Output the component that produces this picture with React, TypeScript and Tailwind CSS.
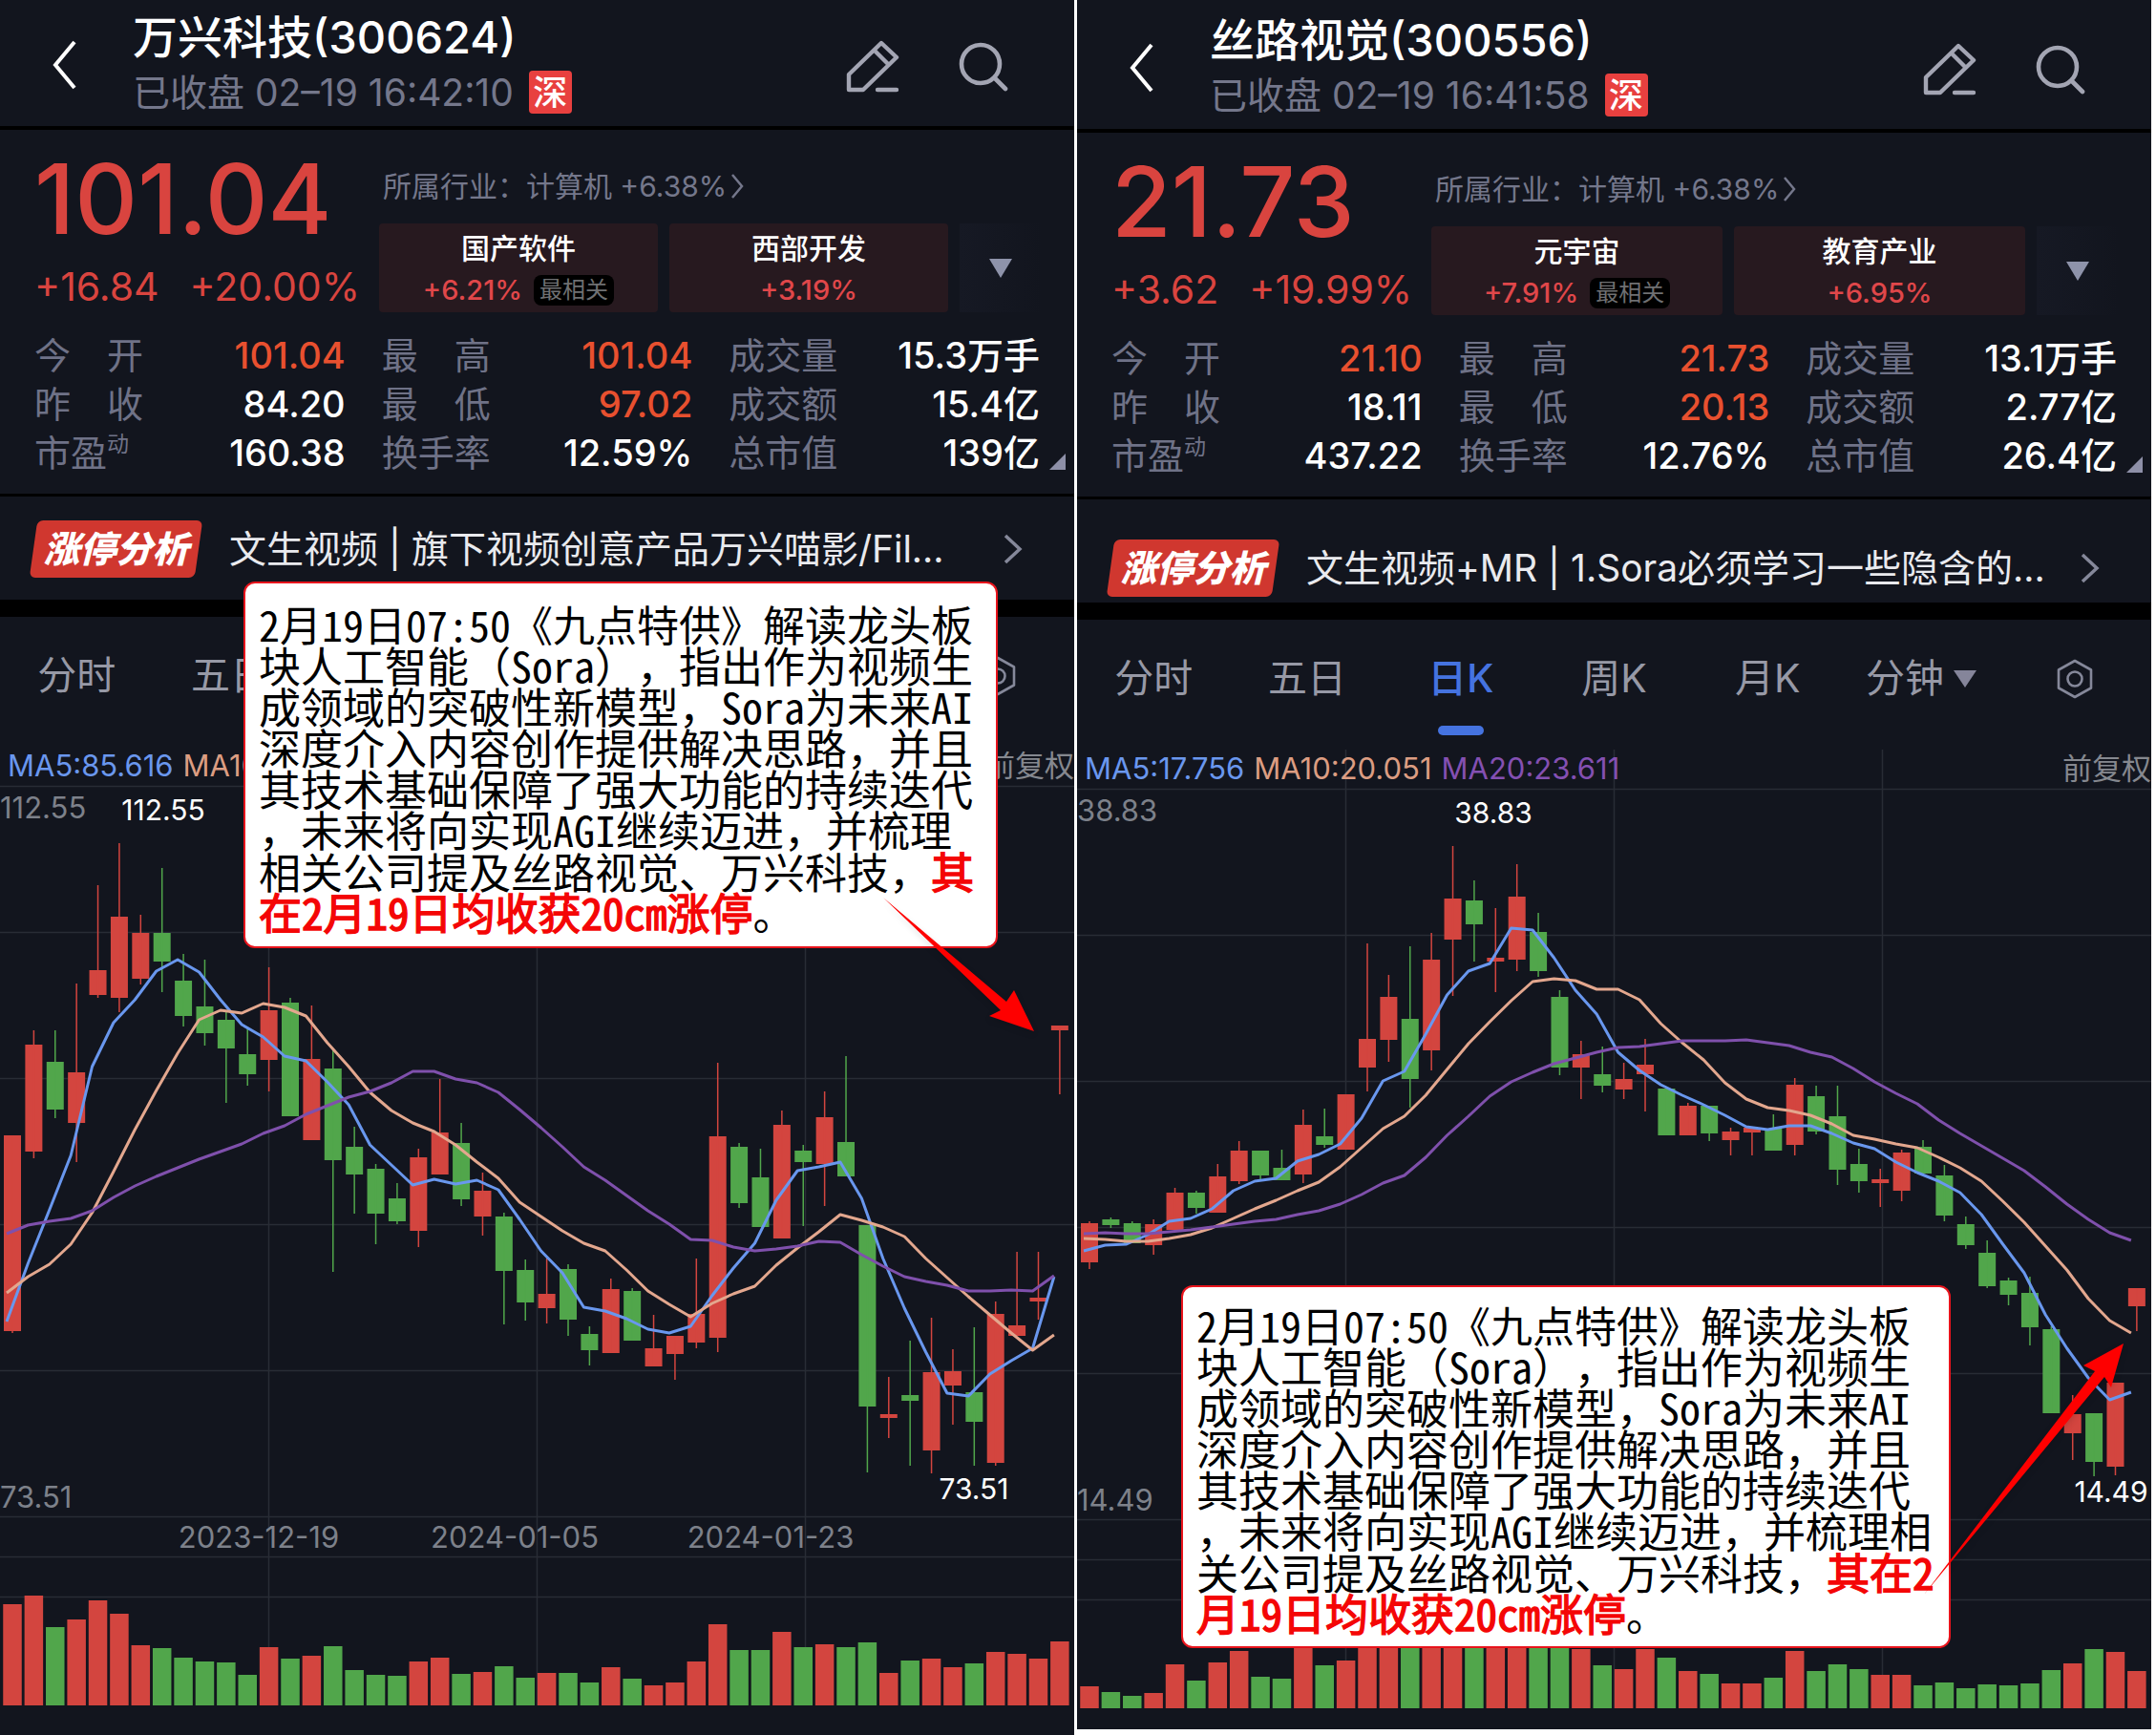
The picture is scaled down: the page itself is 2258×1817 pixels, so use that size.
import React from "react";

type Candle = [number, number, number, number, number];

interface Stat {
  label: React.ReactNode;
  value: string;
  up?: boolean;
}

interface Stock {
  name: string;
  time: string;
  price: string;
  change: string;
  percent: string;
  chips: { name: string; percent: string; best?: boolean }[];
  stats: Stat[];
  analysis: string;
  ma: string[];
  high: string;
  low: string;
}

const UP = "#d3453f";
const DOWN = "#51a64b";
const STEP = 22.385;

/* [colour: 1 up / 0 down, body top, body bottom, wick top, wick bottom] */
const candlesA: Candle[] = [
  [1, 1189, 1394, 1189, 1396], [1, 1094, 1206, 1079, 1213], [0, 1112, 1162, 1079, 1171], [1, 1123, 1176, 1030, 1217],
  [1, 1016, 1042, 927, 1045], [1, 960, 1045, 883, 1060], [1, 977, 1025, 958, 1031], [0, 977, 1007, 909, 1039],
  [0, 1027, 1064, 999, 1075], [0, 1054, 1082, 1005, 1095], [0, 1068, 1098, 1060, 1155], [0, 1104, 1125, 1077, 1137],
  [1, 1058, 1110, 1013, 1143], [0, 1050, 1169, 1045, 1169], [1, 1109, 1194, 1053, 1194], [0, 1119, 1215, 1098, 1332],
  [0, 1201, 1230, 1180, 1271], [0, 1224, 1271, 1219, 1303], [0, 1255, 1279, 1239, 1282], [1, 1212, 1289, 1203, 1306],
  [1, 1186, 1230, 1130, 1230], [0, 1197, 1256, 1176, 1263], [1, 1247, 1274, 1228, 1294], [0, 1274, 1331, 1270, 1387],
  [0, 1330, 1364, 1319, 1383], [1, 1355, 1370, 1318, 1386], [0, 1329, 1382, 1324, 1399], [0, 1397, 1414, 1389, 1430],
  [1, 1350, 1417, 1339, 1417], [0, 1352, 1404, 1349, 1404], [1, 1412, 1431, 1377, 1431], [1, 1399, 1418, 1399, 1445],
  [1, 1376, 1406, 1318, 1412], [1, 1190, 1401, 1113, 1416], [0, 1201, 1260, 1197, 1265], [0, 1233, 1285, 1203, 1285],
  [1, 1178, 1297, 1163, 1297], [0, 1205, 1217, 1199, 1284], [1, 1170, 1219, 1143, 1263], [0, 1196, 1232, 1106, 1232],
  [0, 1283, 1473, 1283, 1542], [1, 1481, 1485, 1442, 1506], [0, 1461, 1467, 1404, 1535], [1, 1437, 1519, 1380, 1543],
  [1, 1436, 1451, 1413, 1492], [0, 1458, 1489, 1390, 1535], [1, 1376, 1532, 1363, 1535], [1, 1388, 1399, 1311, 1399],
  [1, 1359, 1363, 1311, 1382], [1, 1074, 1079, 1074, 1146],
];
const volumeA = [
  106, 115, 82, 90, 110, 96, 63, 60, 50, 46, 45, 32, 61, 49, 52, 62, 37, 32, 31, 46, 50, 33, 35, 41, 29, 34, 34, 24, 40,
  28, 21, 24, 46, 85, 58, 58, 77, 61, 64, 61, 66, 34, 47, 49, 40, 44, 56, 54, 49, 67,
];
const ma5A = [
  1384, 1323, 1267, 1210, 1117, 1071, 1047, 1017, 1005, 1018, 1047, 1073, 1086, 1106, 1111, 1133, 1157, 1199, 1220, 1241,
  1235, 1240, 1236, 1246, 1277, 1310, 1333, 1369, 1373, 1381, 1392, 1396, 1389, 1357, 1328, 1302, 1257, 1226, 1222, 1217,
  1255, 1318, 1370, 1416, 1459, 1462, 1439, 1425, 1412, 1337,
];
const ma10A = [
  1354, 1337, 1324, 1303, 1270, 1227, 1183, 1142, 1103, 1068, 1058, 1061, 1051, 1055, 1064, 1092, 1117, 1144, 1163, 1176,
  1185, 1199, 1217, 1234, 1259, 1274, 1289, 1302, 1310, 1330, 1352, 1366, 1379, 1365, 1355, 1347, 1325, 1307, 1290, 1272,
  1278, 1285, 1295, 1318, 1338, 1358, 1377, 1396, 1414, 1398,
];
const ma20A = [
  1292, 1283, 1279, 1276, 1268, 1254, 1242, 1232, 1223, 1214, 1206, 1198, 1187, 1179, 1167, 1158, 1149, 1143, 1134, 1122,
  1122, 1130, 1134, 1144, 1162, 1181, 1201, 1222, 1236, 1252, 1268, 1282, 1298, 1299, 1306, 1310, 1308, 1305, 1300, 1301,
  1314, 1326, 1337, 1342, 1346, 1352, 1352, 1351, 1352, 1336,
];

const candlesB: Candle[] = [
  [1, 1281, 1322, 1279, 1329], [0, 1277, 1283, 1275, 1286], [0, 1281, 1302, 1279, 1302], [1, 1282, 1304, 1277, 1314],
  [1, 1249, 1288, 1244, 1288], [0, 1249, 1265, 1247, 1271], [1, 1232, 1270, 1219, 1270], [1, 1205, 1237, 1195, 1240],
  [0, 1205, 1231, 1205, 1235], [0, 1223, 1236, 1204, 1236], [1, 1178, 1230, 1162, 1239], [0, 1190, 1199, 1161, 1202],
  [1, 1146, 1204, 1146, 1204], [1, 1088, 1118, 988, 1143], [1, 1044, 1089, 1021, 1112], [0, 1067, 1130, 991, 1160],
  [1, 1005, 1100, 977, 1121], [1, 941, 984, 886, 1043], [0, 943, 968, 922, 1007], [1, 1003, 1007, 951, 1039],
  [1, 939, 1005, 905, 1017], [0, 976, 1017, 956, 1023], [0, 1044, 1118, 1037, 1126], [1, 1104, 1118, 1090, 1151],
  [0, 1125, 1137, 1096, 1144], [1, 1130, 1141, 1113, 1151], [1, 1115, 1125, 1088, 1164], [0, 1140, 1189, 1140, 1189],
  [1, 1158, 1189, 1155, 1189], [0, 1158, 1187, 1158, 1195], [1, 1185, 1194, 1181, 1210], [1, 1181, 1186, 1181, 1210],
  [0, 1182, 1205, 1167, 1205], [1, 1136, 1199, 1129, 1210], [0, 1148, 1185, 1137, 1188], [0, 1169, 1225, 1137, 1241],
  [0, 1219, 1237, 1203, 1249], [1, 1235, 1239, 1224, 1264], [1, 1207, 1247, 1204, 1258], [0, 1201, 1229, 1194, 1229],
  [0, 1231, 1273, 1220, 1279], [0, 1282, 1304, 1274, 1308], [0, 1312, 1347, 1299, 1349], [0, 1341, 1356, 1338, 1367],
  [0, 1354, 1390, 1337, 1409], [0, 1392, 1480, 1389, 1480], [1, 1481, 1501, 1461, 1529], [0, 1480, 1531, 1480, 1546],
  [1, 1448, 1536, 1448, 1545], [1, 1349, 1368, 1349, 1394],
];
const volumeB = [
  23, 17, 13, 16, 46, 29, 48, 60, 33, 31, 70, 45, 50, 80, 80, 80, 80, 80, 80, 80, 80, 80, 80, 62, 45, 41, 62, 53, 39, 36,
  26, 26, 32, 60, 39, 46, 41, 35, 35, 24, 27, 21, 25, 24, 26, 40, 47, 62, 59, 39,
];
const ma5B = [
  1310, 1304, 1303, 1293, 1279, 1276, 1266, 1247, 1237, 1234, 1216, 1209, 1198, 1171, 1132, 1122, 1083, 1042, 1017, 1009,
  972, 974, 1003, 1037, 1062, 1102, 1121, 1136, 1147, 1157, 1168, 1180, 1183, 1179, 1179, 1187, 1197, 1203, 1217, 1228,
  1237, 1249, 1272, 1303, 1333, 1377, 1412, 1443, 1466, 1458,
];
const ma10B = [
  1297, 1298, 1300, 1300, 1297, 1293, 1286, 1276, 1266, 1257, 1247, 1238, 1222, 1202, 1182, 1169, 1147, 1120, 1093, 1070,
  1048, 1028, 1025, 1027, 1036, 1036, 1047, 1072, 1092, 1110, 1134, 1151, 1160, 1163, 1168, 1177, 1189, 1193, 1198, 1202,
  1212, 1223, 1237, 1258, 1280, 1305, 1330, 1360, 1383, 1396,
];
const ma20B = [
  1292, 1291, 1292, 1292, 1290, 1288, 1285, 1282, 1279, 1277, 1272, 1268, 1261, 1251, 1239, 1231, 1212, 1189, 1169, 1148,
  1133, 1123, 1114, 1108, 1102, 1097, 1096, 1093, 1090, 1090, 1090, 1089, 1092, 1095, 1102, 1107, 1119, 1133, 1145, 1156,
  1173, 1187, 1200, 1213, 1226, 1243, 1261, 1277, 1291, 1299,
];

const stockA: Stock = {
  name: "万兴科技(300624)",
  time: "已收盘 02–19 16:42:10",
  price: "101.04",
  change: "+16.84",
  percent: "+20.00%",
  chips: [
    { name: "国产软件", percent: "+6.21%", best: true },
    { name: "西部开发", percent: "+3.19%" },
  ],
  stats: [
    { label: "今　开", value: "101.04", up: true },
    { label: "最　高", value: "101.04", up: true },
    { label: "成交量", value: "15.3万手" },
    { label: "昨　收", value: "84.20" },
    { label: "最　低", value: "97.02", up: true },
    { label: "成交额", value: "15.4亿" },
    { label: <Pe />, value: "160.38" },
    { label: "换手率", value: "12.59%" },
    { label: "总市值", value: "139亿" },
  ],
  analysis: "文生视频 | 旗下视频创意产品万兴喵影/Fil...",
  ma: ["MA5:85.616", "MA10"],
  high: "112.55",
  low: "73.51",
};

const stockB: Stock = {
  name: "丝路视觉(300556)",
  time: "已收盘 02–19 16:41:58",
  price: "21.73",
  change: "+3.62",
  percent: "+19.99%",
  chips: [
    { name: "元宇宙", percent: "+7.91%", best: true },
    { name: "教育产业", percent: "+6.95%" },
  ],
  stats: [
    { label: "今　开", value: "21.10", up: true },
    { label: "最　高", value: "21.73", up: true },
    { label: "成交量", value: "13.1万手" },
    { label: "昨　收", value: "18.11" },
    { label: "最　低", value: "20.13", up: true },
    { label: "成交额", value: "2.77亿" },
    { label: <Pe />, value: "437.22" },
    { label: "换手率", value: "12.76%" },
    { label: "总市值", value: "26.4亿" },
  ],
  analysis: "文生视频+MR | 1.Sora必须学习一些隐含的...",
  ma: ["MA5:17.756", "MA10:20.051", "MA20:23.611"],
  high: "38.83",
  low: "14.49",
};

function Pe() {
  return (
    <span className="flex items-start">
      市盈<span className="text-[23px] leading-8">动</span>
    </span>
  );
}

function Header({ stock, className }: { stock: Stock; className: string }) {
  return (
    <header className={`flex items-center border-b-4 border-black pb-[13px] pl-[54px] pr-[69px] ${className}`}>
      <button type="button" aria-label="返回" className="mt-1">
        <svg width="28" height="52" viewBox="0 0 28 52" fill="none" stroke="#fff" strokeWidth="4">
          <path d="M24 2 4 26l20 24" />
        </svg>
      </button>
      <div className="ml-[57px] flex flex-1 flex-col gap-1.5 whitespace-nowrap">
        <h1 className="text-[47px] font-medium leading-[54px] text-white">{stock.name}</h1>
        <p className="flex items-center gap-4 pt-0.5 text-[39px] leading-[45px] text-[#74778b]">
          {stock.time}
          <span className="flex h-[45px] w-[45px] items-center justify-center rounded-sm bg-[#e8403f] text-4xl font-medium text-white">
            深
          </span>
        </p>
      </div>
      <div className="mt-2 flex items-center gap-[62px] text-[#a3a5b3]">
        <button type="button" aria-label="编辑">
          <svg width="57" height="57" viewBox="0 0 57 57" fill="none" stroke="currentColor" strokeWidth="4.4" strokeLinecap="round" strokeLinejoin="round">
            <path d="M38 4 54 19 19 53H4V37ZM31 12 45 26M34 53H54" />
          </svg>
        </button>
        <button type="button" aria-label="搜索">
          <svg width="52" height="52" viewBox="0 0 52 52" fill="none" stroke="currentColor" strokeWidth="4.6" strokeLinecap="round">
            <circle cx="23" cy="23" r="20" />
            <path d="m38 38 11 11" />
          </svg>
        </button>
      </div>
    </header>
  );
}

function Quote({ stock }: { stock: Stock }) {
  return (
    <section className="border-b-[3px] border-black pb-[17px]">
      <div className="flex gap-5 pl-9 pr-[34px] pt-9">
        <div className="whitespace-nowrap text-[#d9443f]">
          <p className="text-[102px] font-medium leading-[72px]">{stock.price}</p>
          <p className="mt-9 flex gap-8 text-[41px] leading-10">
            <span>{stock.change}</span>
            <span>{stock.percent}</span>
          </p>
        </div>
        <div className="min-w-0 flex-1">
          <a href="#industry" className="flex items-center gap-1 whitespace-nowrap pl-1 text-[30px] leading-[46px] text-[#74778b]">
            <span>所属行业：计算机 +6.38%</span>
            <svg width="14" height="28" viewBox="0 0 14 28" fill="none" stroke="currentColor" strokeWidth="2.5">
              <path d="m2 2 10 12L2 26" />
            </svg>
          </a>
          <div className="mt-4 flex gap-3">
            {stock.chips.map((chip) => (
              <button
                type="button"
                key={chip.name}
                className="flex h-[93px] flex-1 flex-col items-center justify-center gap-1.5 whitespace-nowrap rounded-sm bg-[#27191f] font-medium"
              >
                <span className="text-[30px] leading-10 text-white">{chip.name}</span>
                <span className="flex items-center gap-3 text-[29px] leading-9 text-[#e0474a]">
                  {chip.percent}
                  {chip.best && (
                    <span className="rounded-lg bg-black px-1.5 text-2xl font-normal leading-8 text-[#6f7072]">最相关</span>
                  )}
                </span>
              </button>
            ))}
            <button type="button" aria-label="更多板块" className="flex w-[86px] items-center justify-center bg-linear-to-r from-[#161924] to-[#12151e]">
              <svg width="24" height="20" viewBox="0 0 24 20" fill="#8e93aa">
                <path d="M0 0h24L12 20Z" />
              </svg>
            </button>
          </div>
        </div>
      </div>
      <div className="relative">
        <dl className="mt-5 grid grid-cols-3 gap-x-[38px] px-9">
          {stock.stats.map((s, i) => (
            <div key={i} className="flex justify-between whitespace-nowrap text-[38px] leading-[51px]">
              <dt className="text-[#6f7287]">{s.label}</dt>
              <dd className={s.up ? "font-medium text-[#e8502f]" : "font-medium text-white"}>{s.value}</dd>
            </div>
          ))}
        </dl>
        <svg className="absolute bottom-2 right-[9px]" width="17" height="17" viewBox="0 0 17 17" fill="#8e90a8">
          <path d="M17 0v17H0Z" />
        </svg>
      </div>
    </section>
  );
}

function Analysis({ text, className }: { text: string; className: string }) {
  return (
    <a href="#analysis" className={`flex items-center border-b-black pl-[31px] pr-[54px] ${className}`}>
      <span className="relative flex h-[60px] w-[181px] items-center justify-center">
        <span className="absolute inset-x-1 inset-y-0 -skew-x-[8deg] rounded-md bg-[#d0372f]" />
        <span className="relative whitespace-nowrap text-[38px] font-black italic text-white">涨停分析</span>
      </span>
      <span className="ml-[28px] flex-1 whitespace-nowrap text-[39px] leading-[60px] text-[#e9eaee]">{text}</span>
      <svg width="20" height="32" viewBox="0 0 20 32" fill="none" stroke="#85889a" strokeWidth="3.5">
        <path d="m2 2 15 14L2 30" />
      </svg>
    </a>
  );
}

function Tabs({ covered = false }: { covered?: boolean }) {
  const tab = "flex h-[54px] items-center justify-center whitespace-nowrap";
  return (
    <nav className="grid h-[136px] grid-cols-7 items-start pt-[35px] text-[41px] text-[#9799a6]">
      <button type="button" className={tab}>分时</button>
      <button type="button" className={tab}>五日</button>
      {covered ? (
        <span className="col-span-4" />
      ) : (
        <>
          <button type="button" className="flex flex-col items-center text-[#4573e0]">
            <span className="flex h-[54px] items-center font-medium">日K</span>
            <span className="mt-[22px] h-2.5 w-12 rounded-full bg-[#4573e0]" />
          </button>
          <button type="button" className={tab}>周K</button>
          <button type="button" className={tab}>月K</button>
          <button type="button" aria-haspopup="menu" className="flex h-[54px] items-center justify-center gap-2.5 whitespace-nowrap">
            分钟
            <svg width="24" height="18" viewBox="0 0 24 18" fill="#85859a">
              <path d="M0 0h24L12 18Z" />
            </svg>
          </button>
        </>
      )}
      <button type="button" aria-label="图表设置" className={tab}>
        <svg width="38" height="42" viewBox="0 0 38 42" fill="none" stroke="#85889a" strokeWidth="2.6" strokeLinejoin="round">
          <path d="m19 2 17 9.500v19L19 40 2 30.500v-19Z" />
          <circle cx="19" cy="21" r="7.500" />
        </svg>
      </button>
    </nav>
  );
}

function line(values: number[]) {
  return values.map((y, i) => `${(7 + i * STEP).toFixed(1)},${y}`).join(" ");
}

interface ChartProps {
  stock: Stock;
  top: number;
  height: number;
  candles: Candle[];
  volume: number[];
  mas: [number[], number[], number[]];
  highX: number;
  lowX: number;
  dates: [string, number][];
}

function Chart({ stock, top, height, candles, volume, mas, highX, lowX, dates }: ChartProps) {
  const base = top + 963;
  return (
    <section className="flex flex-col">
      <div className="relative z-10 flex h-[41px] items-center gap-2.5 whitespace-nowrap pl-2 text-[31px]">
        <span className="text-[#6a97ee]">{stock.ma[0]}</span>
        <span className="text-[#dc9d82]">{stock.ma[1]}</span>
        <span className="text-[#8450b2]">{stock.ma[2]}</span>
        <span className="ml-auto text-[#85888f]">前复权</span>
      </div>
      <svg className="block h-auto w-full overflow-visible" viewBox={`0 ${top} 1125 ${height}`} role="img" aria-label={`${stock.name} 日K`}>
        <g stroke="#282c35" strokeWidth="1.5">
          {[0, 153, 306, 459, 612, 765, 807, 849].map((dy) => (
            <path key={dy} d={`M0 ${top + dy + 0.5}H1125`} />
          ))}
          {[281, 562, 843].map((x) => (
            <path key={x} d={`M${x + 0.5} ${top - 41}V${base}`} />
          ))}
        </g>
        {candles.map(([up, a, b, h, l], i) => {
          const x = 13 + i * STEP;
          return (
            <g key={i} fill={up ? UP : DOWN}>
              <rect x={x - 9} y={a} width={18} height={b - a} />
              <rect x={x - 0.75} y={h} width={1.5} height={l - h} />
              <rect x={x - 9.75} y={base - volume[i]} width={19.5} height={volume[i]} />
            </g>
          );
        })}
        <g fill="none" strokeWidth="3" strokeLinejoin="round">
          <polyline points={line(mas[0])} stroke="#6997ee" />
          <polyline points={line(mas[1])} stroke="#e3a78e" />
          <polyline points={line(mas[2])} stroke="#7f50ac" />
        </g>
        <g fontSize="31" fill="#7d818a">
          <text x="0" y={top + 34}>{stock.high}</text>
          <text x="0" y={top + 756}>{stock.low}</text>
          {dates.map(([d, x]) => (
            <text key={d} x={x} y={top + 798} textAnchor="middle">{d}</text>
          ))}
        </g>
        <g fontSize="30" fill="#fff" textAnchor="middle">
          <text x={highX} y={top + 36}>{stock.high}</text>
          <text x={lowX} y={top + 747}>{stock.low}</text>
        </g>
      </svg>
    </section>
  );
}

function Red({ children }: { children: React.ReactNode }) {
  return <strong className="text-[45px] font-normal text-[#f40606] [-webkit-text-stroke:1.500px_#f40606]">{children}</strong>;
}

function Callout({ className, lines }: { className: string; lines: React.ReactNode[] }) {
  return (
    <aside
      className={`absolute z-20 rounded-xl border-2 border-[#e8141c] bg-white pl-3.5 font-['Noto_Sans_Mono_CJK_SC','Noto_Sans_CJK_SC',sans-serif] text-[44px] leading-[43px] text-black [text-spacing-trim:space-all] ${className}`}
    >
      {lines.map((l, i) => (
        <p key={i} className="h-[43px] whitespace-nowrap">{l}</p>
      ))}
    </aside>
  );
}

const intro = [
  "2月19日07:50《九点特供》解读龙头板",
  "块人工智能（Sora），指出作为视频生",
  "成领域的突破性新模型，Sora为未来AI",
  "深度介入内容创作提供解决思路，并且",
  "其技术基础保障了强大功能的持续迭代",
];

export default function App() {
  return (
    <main lang="zh-CN" className="flex items-start gap-[3px] bg-white pr-[5px] font-['Inter','Noto_Sans_CJK_SC',sans-serif]">
      <article className="relative min-w-0 flex-1 bg-[#12151e]">
        <Header stock={stockA} className="pt-3" />
        <Quote stock={stockA} />
        <Analysis text={stockA.analysis} className="border-b-[18px] pb-[23px] pt-[25px]" />
        <Tabs covered />
        <Chart
          stock={stockA}
          top={823}
          height={994}
          candles={candlesA}
          volume={volumeA}
          mas={[ma5A, ma10A, ma20A]}
          highX={171}
          lowX={1020}
          dates={[["2023-12-19", 271], ["2024-01-05", 539], ["2024-01-23", 807]]}
        />
        <Callout
          className="left-[255px] top-[609px] w-[790px] pb-[15px] pt-[21px]"
          lines={[
            ...intro,
            "，未来将向实现AGI继续迈进，并梳理",
            <>相关公司提及丝路视觉、万兴科技，<Red>其</Red></>,
            <><Red>在2月19日均收获20cm涨停</Red>。</>,
          ]}
        />
        <svg className="absolute left-[925px] top-[940px] z-30 drop-shadow-md" width="158" height="140" viewBox="0 0 158 140" fill="#fe0000">
          <path d="M0 0 129 109 137 97 158 140 111 124 123 118Z" />
        </svg>
      </article>
      <article className="relative min-w-0 flex-1 bg-[#12151e]">
        <Header stock={stockB} className="pt-[15px]" />
        <Quote stock={stockB} />
        <Analysis text={stockB.analysis} className="border-b-[18px] pb-1.5 pt-[42px]" />
        <Tabs />
        <Chart
          stock={stockB}
          top={826}
          height={985}
          candles={candlesB}
          volume={volumeB}
          mas={[ma5B, ma10B, ma20B]}
          highX={436}
          lowX={1083}
          dates={[]}
        />
        <Callout
          className="left-[109px] top-[1346px] w-[806px] pb-3.5 pt-[18px]"
          lines={[
            ...intro,
            "，未来将向实现AGI继续迈进，并梳理相",
            <>关公司提及丝路视觉、万兴科技，<Red>其在2</Red></>,
            <><Red>月19日均收获20cm涨停</Red>。</>,
          ]}
        />
        <svg className="absolute left-[887px] top-[1407px] z-30 drop-shadow-md" width="209" height="263" viewBox="0 0 209 263" fill="#fe0000">
          <path d="M0 263 179 29 167 23 209 0 196 46 189 35Z" />
        </svg>
      </article>
    </main>
  );
}
